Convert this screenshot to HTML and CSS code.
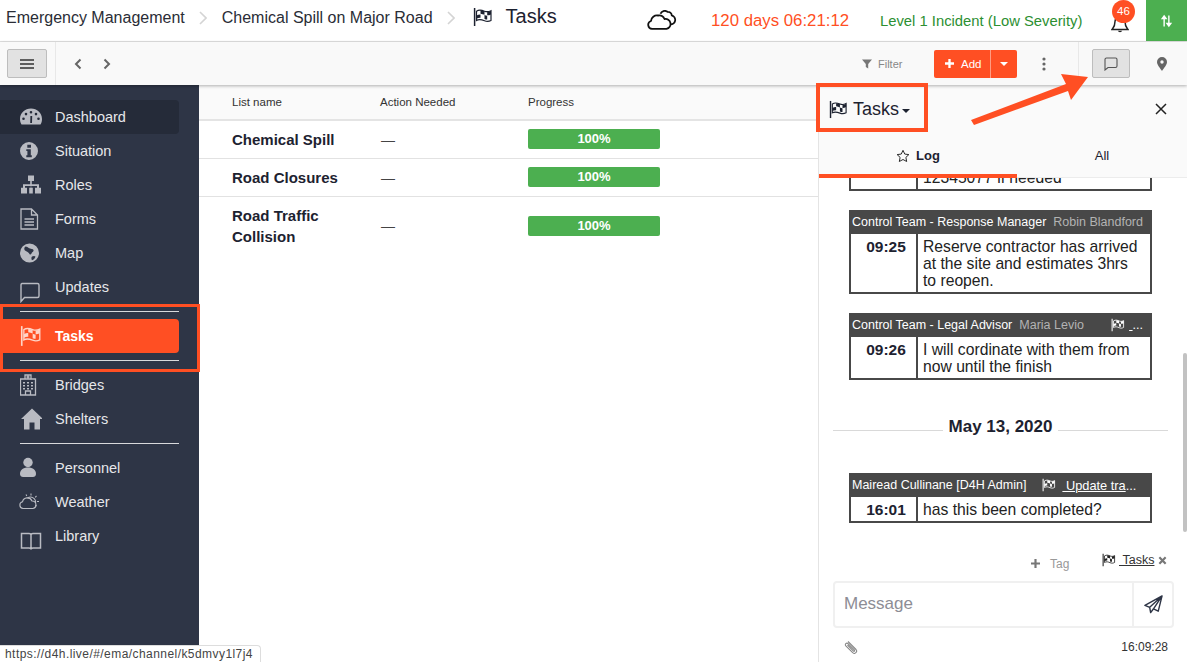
FILE: index.html
```html
<!DOCTYPE html>
<html lang="en">
<head>
<meta charset="utf-8">
<title>Tasks</title>
<link rel="stylesheet" href="styles.css">
</head>
<body>
<svg class="defs" width="0" height="0" aria-hidden="true">
  <symbol id="flag" viewBox="0 0 20 20">
    <path d="M1.600 1v18" fill="none" stroke="currentColor" stroke-width="1.500"/>
    <path d="M3.500 4.200c3-2 5.500-1 8 0s4 .8 6.500-.5v9.800c-2.500 1.300-4 1.300-6.500.3s-5-2-8-.3z" fill="none" stroke="currentColor" stroke-width="1.200"/>
    <path d="M7.500 3.300c1.500.1 2.800.6 4 1v3.500c-1.300-.5-2.600-1-4-1.100zM14.200 5c1.200 0 2.400-.2 3.800-.9v3.300c-1.400.7-2.600 1-3.800.9zM3.500 8.500c1.300-.8 2.700-1.200 4-1.100v3.400c-1.400-.1-2.700.2-4 .9zM11.500 8c1 .4 1.800.7 2.700.8v3.800c-.9 0-1.800-.3-2.700-.6z" fill="currentColor"/>
  </symbol>
</svg>

<header class="topbar">
  <nav class="crumbs">
    <span class="crumb">Emergency Management</span>
    <svg class="crumb-sep" viewBox="0 0 8 14"><path d="M1 1l6 6-6 6" fill="none" stroke="#d4d4d4" stroke-width="1.600"/></svg>
    <span class="crumb">Chemical Spill on Major Road</span>
    <svg class="crumb-sep" viewBox="0 0 8 14"><path d="M1 1l6 6-6 6" fill="none" stroke="#d4d4d4" stroke-width="1.600"/></svg>
    <svg class="crumb-flag"><use href="#flag"/></svg>
    <span class="crumb-current">Tasks</span>
  </nav>
  <svg class="cloud" viewBox="0 0 30 20"><path d="M5 18.800a4 4 0 0 1-1-7.800 6 6 0 0 1 7-5.500 6 6 0 0 1 6.500 3.500 5 5 0 0 1 2 9.800z" fill="none" stroke="#111" stroke-width="1.800" stroke-linejoin="round"/><path d="M13.500 3.800a4.500 4.500 0 0 1 7-2 4 4 0 0 1 4.300 3.600 4.600 4.600 0 0 1-1.800 9" fill="none" stroke="#111" stroke-width="1.800"/></svg>
  <span class="timer">120 days 06:21:12</span>
  <span class="level">Level 1 Incident (Low Severity)</span>
  <div class="bell">
    <svg viewBox="0 0 18 18"><path d="M9 1.500a5 5 0 0 0-5 5c0 5-2 6.500-3 8h16c-1-1.500-3-3-3-8a5 5 0 0 0-5-5z" fill="none" stroke="#222" stroke-width="1.500"/><path d="M6.800 15.800a2.300 2 0 0 0 4.400 0z" fill="#222"/></svg>
    <span class="badge">46</span>
  </div>
  <div class="sort-box">
    <svg viewBox="0 0 14 16"><path d="M4 15V3M1.500 5L4 1.500 6.500 5z M10 1v12M7.500 11l2.500 3.500 2.500-3.500z" fill="#fff" stroke="#fff" stroke-width="1.800"/></svg>
  </div>
</header>

<div class="toolbar">
  <button class="tool-btn menu-btn" aria-label="Menu"><svg viewBox="0 0 14 10"><path d="M0 1h14M0 5h14M0 9h14" stroke="#333" stroke-width="1.500"/></svg></button>
  <span class="tool-sep first"></span>
  <svg class="chev" viewBox="0 0 8 12"><path d="M6.500 1.500L2 6l4.500 4.500" fill="none" stroke="#666" stroke-width="2"/></svg>
  <svg class="chev next" viewBox="0 0 8 12"><path d="M1.500 1.500L6 6l-4.500 4.500" fill="none" stroke="#666" stroke-width="2"/></svg>
  <span class="tool-filter"><svg viewBox="0 0 10 10"><path d="M0 .500h10L6.200 5v4.500L3.800 8V5z" fill="#777"/></svg>Filter</span>
  <div class="add-btn">
    <span class="add-main"><svg viewBox="0 0 10 10"><path d="M5 0v10M0 5h10" stroke="#fff" stroke-width="2.600"/></svg>Add</span>
    <span class="add-caret"></span>
  </div>
  <svg class="kebab" viewBox="0 0 4 14"><circle cx="2" cy="2" r="1.600" fill="#666"/><circle cx="2" cy="7" r="1.600" fill="#666"/><circle cx="2" cy="12" r="1.600" fill="#666"/></svg>
  <span class="tool-sep second"></span>
  <button class="tool-btn chat-btn" aria-label="Chat"><svg viewBox="0 0 14 14"><path d="M2.500 1h9A1.500 1.500 0 0 1 13 2.500v6.500A1.500 1.500 0 0 1 11.500 10.500H4L1 13V2.500A1.500 1.500 0 0 1 2.500 1z" fill="none" stroke="#555" stroke-width="1.100"/></svg></button>
  <svg class="pin" viewBox="0 0 10 14"><path fill-rule="evenodd" d="M5 0a5 5 0 0 1 5 5c0 3-3.500 6.500-5 9-1.500-2.500-5-6-5-9a5 5 0 0 1 5-5zm0 3.300a1.700 1.700 0 1 0 0 3.400 1.700 1.700 0 0 0 0-3.400z" fill="#666"/></svg>
</div>

<div class="content">
  <aside class="sidebar">
    <a class="nav-item active-soft"><svg class="nav-icon" viewBox="0 0 22 22"><path fill-rule="evenodd" d="M11 2.500C5 2.500 0 7 0 13c0 2 .5 4 1.500 5.500h19C21.500 17 22 15 22 13c0-6-5-10.500-11-10.500zM11 5a1.300 1.300 0 1 1 0 2.600A1.300 1.300 0 0 1 11 5zM6 6.800a1.300 1.300 0 1 1 0 2.600 1.300 1.300 0 0 1 0-2.600zM16 6.800a1.300 1.300 0 1 1 0 2.600 1.300 1.300 0 0 1 0-2.600zM3.500 11.500a1.300 1.300 0 1 1 0 2.600 1.300 1.300 0 0 1 0-2.600zM18.500 11.500a1.300 1.300 0 1 1 0 2.600 1.300 1.300 0 0 1 0-2.600zM10.200 17l.2-7h1.800l-.2 7z" fill="#b9bbc2"/></svg>Dashboard</a>
    <a class="nav-item"><svg class="nav-icon" viewBox="2 0 22 22"><path fill-rule="evenodd" d="M11 2a9 9 0 1 1 0 18 9 9 0 0 1 0-18zM9.300 4.800v3h3.700v-3zM8.300 9.300v1.800h1.100v4.200H8.300v1.900h5.500v-1.900h-1V9.300z" fill="#b9bbc2"/></svg>Situation</a>
    <a class="nav-item"><svg class="nav-icon" viewBox="0 0 22 22"><path d="M8 1.500h6v5.500h-2.200v3.200h7.200v3.500h2v5.800h-6v-5.800h2v-1.700h-6.200v1.700h2v5.800H9.200v-5.800h2v-1.700H5v1.700h2v5.800H1v-5.800h2v-3.500h7.200V7H8z" fill="#b9bbc2"/></svg>Roles</a>
    <a class="nav-item"><svg class="nav-icon" viewBox="2 0 22 22"><path d="M3 1h10.500L19.500 7v14H3zM13.500 1v6h6M6.500 11h9.500M6.500 14h9.500M6.500 17h9.500" fill="none" stroke="#b9bbc2" stroke-width="1.300"/></svg>Forms</a>
    <a class="nav-item"><svg class="nav-icon" viewBox="1.500 0 22 22"><path fill-rule="evenodd" d="M11 1.500a9.500 9.500 0 1 1 0 19 9.500 9.500 0 0 1 0-19zM7 4.500c2 0 2.500 1.500 4.500 2 1 .5 3 0 3.500 1.500.5 2-1.500 2-2 3.500-.5 1.200-1.500 1.500-2 .5-.5-1.500-3-2.500-4.500-3.500C5.500 7.500 5.500 5.500 7 4.500zM13.500 14.500c1.500-.7 3-.7 3.500.3-.5 1.500-2 3-3.500 3.500-.8-1.200-.8-3 0-3.800z" fill="#b9bbc2"/></svg>Map</a>
    <a class="nav-item updates"><svg class="nav-icon" viewBox="1 0 22 22"><path d="M3 2.500h15.500A1.500 1.500 0 0 1 20 4v11a1.500 1.500 0 0 1-1.500 1.500H5.500L2 20.500V4A1.500 1.500 0 0 1 3 2.500z" fill="none" stroke="#b9bbc2" stroke-width="1.400"/></svg>Updates</a>
    <hr class="nav-rule">
    <a class="nav-item current"><svg class="nav-icon flagged"><use href="#flag"/></svg>Tasks</a>
    <hr class="nav-rule">
    <a class="nav-item"><svg class="nav-icon" viewBox="3 0 22 22"><path d="M3.500 5h15v16h-15zM8 5V1h6v4M11 1.500v3M9.500 3h3M8.500 21v-4h5v4" fill="none" stroke="#b9bbc2" stroke-width="1.300"/><path d="M6 8h2v1.500H6zM10 8h2v1.500h-2zM14 8h2v1.500h-2zM6 11h2v1.500H6zM10 11h2v1.500h-2zM14 11h2v1.500h-2zM6 14h2v1.500H6zM10 14h2v1.500h-2zM14 14h2v1.500h-2z" fill="#b9bbc2"/></svg>Bridges</a>
    <a class="nav-item"><svg class="nav-icon" viewBox="0 0 22 22"><path d="M12 .500L23 11h-3v10.500h-5.500V14.500h-5v7H4V11H1z" fill="#b9bbc2"/></svg>Shelters</a>
    <hr class="nav-rule">
    <a class="nav-item"><svg class="nav-icon" viewBox="1 0 22 22"><circle cx="9" cy="5.500" r="4.700" fill="#b9bbc2"/><path d="M1 17c0-4 3-6.500 8-6.500s8 2.500 8 6.500c0 2-1.500 3-3 3H4c-1.500 0-3-1-3-3z" fill="#b9bbc2"/></svg>Personnel</a>
    <a class="nav-item"><svg class="nav-icon weather" viewBox="0 0 22 18"><path d="M5 15.500a3.400 3.400 0 0 1-.5-6.700A5 5 0 0 1 14 8a3.800 3.800 0 0 1 1 7.500z" fill="none" stroke="#b9bbc2" stroke-width="1.100"/><path d="M9.500 5.200A5 5 0 0 1 17.500 10M13 .500v2M18.500 3l-1.300 1.300M21 8.500h-2M8 1.500l.8 1.500M18.500 13l-1.200-1" fill="none" stroke="#b9bbc2" stroke-width="1.100"/></svg>Weather</a>
    <a class="nav-item updates"><svg class="nav-icon" viewBox="0 0 22 22"><path d="M1.500 3.500H9c1.200 0 2 .8 2 1.500v14.500c0-1-.8-1.500-2-1.500H1.500zM20.500 3.500H13c-1.200 0-2 .8-2 1.500v14.500c0-1 .8-1.500 2-1.500h7.500z" fill="none" stroke="#b9bbc2" stroke-width="1.500"/></svg>Library</a>
  </aside>

  <main class="list">
    <div class="list-head">
      <span>List name</span><span>Action Needed</span><span>Progress</span>
    </div>
    <div class="list-row">
      <strong class="row-name">Chemical Spill</strong><span class="row-dash">—</span><div class="bar">100%</div>
    </div>
    <div class="list-row">
      <strong class="row-name">Road Closures</strong><span class="row-dash">—</span><div class="bar">100%</div>
    </div>
    <div class="list-row last">
      <strong class="row-name">Road Traffic Collision</strong><span class="row-dash">—</span><div class="bar">100%</div>
    </div>
  </main>

  <section class="panel">
    <div class="panel-head">
      <svg class="panel-flag"><use href="#flag"/></svg>
      <span class="panel-title">Tasks</span>
      <span class="caret"></span>
      <svg class="close" viewBox="0 0 12 12"><path d="M1 1l10 10M11 1L1 11" stroke="#222" stroke-width="1.500"/></svg>
    </div>
    <div class="tabs">
      <span class="tab on"><svg viewBox="0 0 16 16"><path d="M8 1.500l2 4.300 4.700.6-3.400 3.200.9 4.700L8 12l-4.200 2.300.9-4.700L1.300 6.400 6 5.800z" fill="none" stroke="#222" stroke-width="1.100"/></svg>Log</span>
      <span class="tab">All</span>
    </div>
    <div class="feed">
      <article class="msg">
        <div class="msg-body"><time class="msg-time"></time><p class="msg-text">12345077 if needed</p></div>
      </article>
      <article class="msg">
        <div class="msg-head"><span>Control Team - Response Manager</span><span class="who">Robin Blandford</span></div>
        <div class="msg-body"><time class="msg-time">09:25</time><p class="msg-text">Reserve contractor has arrived at the site and estimates 3hrs to reopen.</p></div>
      </article>
      <article class="msg">
        <div class="msg-head"><span>Control Team - Legal Advisor</span><span class="who">Maria Levio</span><span class="msg-tag"><svg><use href="#flag"/></svg><u>&nbsp;</u>...</span></div>
        <div class="msg-body"><time class="msg-time">09:26</time><p class="msg-text">I will cordinate with them from now until the finish</p></div>
      </article>
      <div class="date-rule"><span>May 13, 2020</span></div>
      <article class="msg">
        <div class="msg-head"><span>Mairead Cullinane [D4H Admin]</span><span class="msg-tag wide"><svg><use href="#flag"/></svg><u>&nbsp;Update tra</u>...</span></div>
        <div class="msg-body"><time class="msg-time">16:01</time><p class="msg-text">has this been completed?</p></div>
      </article>
    </div>
    <div class="tag-row">
      <svg class="tag-plus" viewBox="0 0 10 10"><path d="M5 0v10M0 5h10" stroke="#777" stroke-width="2.400"/></svg>
      <span class="tag-label">Tag</span>
      <svg class="tag-flag"><use href="#flag"/></svg>
      <u class="tag-name">&nbsp;Tasks</u>
      <svg class="tag-x" viewBox="0 0 10 10"><path d="M1.500 1.500l7 7M8.500 1.500l-7 7" stroke="#777" stroke-width="2.400"/></svg>
    </div>
    <div class="composer">
      <span class="placeholder">Message</span>
      <span class="send"><svg viewBox="0 0 20 20"><path d="M19 1L1 11l5 2 1 5.500 3-4 5 2.500zM19 1L6 13M19 1l-9 13.500" fill="none" stroke="#2e3546" stroke-width="1.500" stroke-linejoin="round"/></svg></span>
    </div>
    <div class="panel-foot">
      <svg class="clip" viewBox="0 0 14 14"><path d="M4 1.500l8 8a2.300 2.300 0 0 1-3.300 3.200L1.800 5.800a1.500 1.500 0 0 1 2.200-2.200l6.500 6.500a.7.700 0 0 1-1 1L3.500 5" fill="none" stroke="#888" stroke-width="1.100"/></svg>
      <span>16:09:28</span>
    </div>
  </section>
</div>

<span class="scroll-thumb"></span>
<div class="status-url">https://d4h.live/#/ema/channel/k5dmvy1l7j4</div>
<span class="mark mark-nav"></span>
<span class="mark mark-title"></span>
<svg class="mark-arrow" viewBox="0 0 1187 662"><path d="M971 120L1066 84l-5-10 27 3-17 23-3-9-94 34z" fill="#ff4f23"/></svg>
</body>
</html>
```
FILE: styles.css
```css
* { box-sizing: border-box; }
html, body { margin: 0; height: 100%; }
body {
  display: flex;
  flex-direction: column;
  height: 100vh;
  overflow: hidden;
  position: relative;
  font-family: "Liberation Sans", Arial, sans-serif;
  color: #1d2230;
  background: #fff;
}
.defs { position: absolute; }

/* top bar */
.topbar {
  flex: 0 0 42px;
  display: flex;
  align-items: center;
  padding-left: 6px;
  background: #fff;
  border-bottom: 1px solid #e2e2e2;
}
.crumbs { display: flex; align-items: center; width: 641px; margin-top: -5px; }
.crumb { font-size: 16px; color: #2a2d36; }
.crumb-sep { width: 8px; height: 14px; margin: 0 15px 0 14px; }
.crumb-flag { width: 20px; height: 20px; margin: -3px 13px 0 3px; color: #1d2230; }
.crumb-current { font-size: 20px; margin-top: -3px; }
.cloud { width: 30px; height: 20px; margin-top: -2px; }
.timer { margin-left: 34px; font-size: 16.800px; color: #ff4f23; width: 169px; white-space: nowrap; }
.level { font-size: 14.800px; color: #2c8f32; width: 231px; white-space: nowrap; }
.bell { position: relative; width: 18px; height: 18px; }
.bell svg { display: block; width: 18px; height: 18px; margin-top: 3px; }
.badge {
  position: absolute;
  left: 1px;
  top: -12px;
  width: 23px;
  height: 23px;
  border-radius: 50%;
  background: #ff4f23;
  color: #fff;
  font-size: 11.500px;
  line-height: 23px;
  text-align: center;
}
.sort-box {
  margin-left: auto;
  width: 41px;
  height: 41px;
  background: #4caf50;
  display: flex;
  align-items: center;
  justify-content: center;
}
.sort-box svg { width: 11px; height: 14px; }

/* toolbar */
.toolbar {
  flex: 0 0 43px;
  display: flex;
  align-items: center;
  padding-left: 7px;
  background: #f9f9f9;
  box-shadow: 0 1px 3px rgba(0,0,0,.3);
  position: relative;
  z-index: 2;
}
.tool-btn {
  height: 29px;
  padding: 0;
  border: 1px solid #bdbdbd;
  border-radius: 2px;
  background: #e2e2e2;
  display: flex;
  align-items: center;
  justify-content: center;
}
.menu-btn { width: 40px; }
.menu-btn svg { width: 14px; height: 10px; }
.tool-sep { width: 1px; height: 43px; background: #e8e8e8; }
.tool-sep.first { margin-left: 8px; }
.chev { width: 8px; height: 12px; margin-left: 18px; }
.chev.next { margin-left: 21px; }
.tool-filter {
  margin-left: 751px;
  width: 72px;
  display: flex;
  align-items: center;
  font-size: 11px;
  color: #888;
}
.tool-filter svg { width: 10px; height: 10px; margin-right: 6px; }
.add-btn {
  width: 83px;
  height: 28px;
  display: flex;
  background: #ff4f23;
  border-radius: 2px;
  color: #fff;
  font-size: 11.500px;
}
.add-main {
  width: 57px;
  display: flex;
  align-items: center;
  padding-left: 11px;
  border-right: 1px solid #ff9c82;
}
.add-main svg { width: 9px; height: 9px; margin-right: 7px; }
.add-caret {
  margin: 12px 0 0 9px;
  width: 0;
  height: 0;
  border: 4px solid transparent;
  border-top: 4.500px solid #fff;
}
.kebab { width: 4px; height: 14px; margin-left: 25px; }
.tool-sep.second { margin-left: 32px; }
.chat-btn { width: 38px; margin-left: 13px; }
.chat-btn svg { width: 14px; height: 14px; }
.pin { width: 10px; height: 14px; margin-left: 27px; }

/* body */
.content { flex: 1; display: flex; min-height: 0; }
.sidebar {
  flex: 0 0 199px;
  padding: 15px 20px 0 0;
  background: #2e3546;
}
.nav-item {
  height: 34px;
  display: flex;
  align-items: center;
  padding-left: 20px;
  font-size: 14.500px;
  color: #e6e7ea;
  border-radius: 0 4px 4px 0;
}
.nav-item.active-soft { background: #252b39; }
.nav-item.current { background: #ff4f23; color: #fff; font-weight: 700; font-size: 14px; }
.nav-icon { flex: 0 0 22px; width: 22px; height: 22px; margin-right: 13px; }
.nav-icon.flagged { color: #ffd5c8; }
.nav-icon.weather { margin-left: -2px; margin-right: 15px; height: 18px; }
.updates .nav-icon { margin-top: 9px; }
.nav-rule { height: 1px; margin: 7px 0 7px 20px; border: 0; background: #d8d9dc; }

/* list */
.list { flex: 1; min-width: 0; }
.list-head, .list-row {
  display: grid;
  grid-template-columns: 148px 148px 132px;
  padding-left: 33px;
  align-items: center;
  border-bottom: 1px solid #e2e2e2;
}
.list-head {
  height: 36px;
  padding-bottom: 1px;
  font-size: 11.500px;
  color: #333;
  background: #fafafa;
  border-bottom: 2px solid #e4e4e4;
}
.list-row { height: 38px; }
.list-row.last { height: auto; padding-top: 8px; border-bottom: 0; }
.row-name { font-size: 15px; line-height: 21px; width: 120px; white-space: normal; }
.list-row:not(.last) .row-name { white-space: nowrap; width: auto; }
.row-dash { font-size: 14px; color: #444; padding-left: 1px; }
.list-row:not(.last) .row-dash { padding-top: 1px; }
.bar {
  height: 20px;
  margin-bottom: 1px;
  background: #4caf50;
  border-radius: 2px;
  color: #fff;
  font-size: 13px;
  font-weight: 700;
  line-height: 19px;
  text-align: center;
}

/* panel */
.panel {
  flex: 0 0 369px;
  display: flex;
  flex-direction: column;
  min-height: 0;
  border-left: 1px solid #e4e4e4;
  background: #fff;
}
.panel-head {
  flex: 0 0 48px;
  display: flex;
  align-items: center;
  padding-left: 10px;
  background: #fafafa;
}
.panel-flag { width: 19px; height: 19px; margin-right: 5px; }
.panel-title { font-size: 18px; }
.caret {
  margin: 4px 0 0 3px;
  border: 4px solid transparent;
  border-top: 4px solid #1d2230;
  border-bottom: 0;
}
.close { width: 12px; height: 12px; margin-left: auto; margin-right: 20px; }
.tabs { flex: 0 0 45px; display: flex; background: #fafafa; border-bottom: 1px solid #ececec; }
.tab {
  display: flex;
  align-items: center;
  justify-content: center;
  font-size: 13px;
  width: 170px;
}
.tab.on {
  width: 198px;
  padding-top: 4px;
  font-weight: 700;
  border-bottom: 4px solid #ff4f23;
  margin-bottom: -1px;
}
.tab svg { width: 14px; height: 14px; margin-right: 6px; }
.feed {
  flex: 1;
  min-height: 0;
  overflow: hidden;
  display: flex;
  flex-direction: column;
  justify-content: flex-end;
  padding-bottom: 22px;
}
.msg {
  flex-shrink: 0;
  width: 303px;
  margin: 0 0 19px 30px;
  background: #fff;
}
.msg:last-child { margin-bottom: 0; }
.msg-head {
  height: 24px;
  display: flex;
  align-items: center;
  gap: 7px;
  padding: 0 3px;
  background: #484848;
  color: #fff;
  font-size: 12.500px;
  white-space: nowrap;
}
.who { color: #b3b3b3; }
.msg-tag { margin-left: auto; margin-right: 6px; display: flex; align-items: center; }
.msg-tag.wide { margin-left: 9px; margin-right: 0; font-size: 12.800px; }
.msg-tag.wide svg { margin-right: 6px; }
.msg-tag svg { width: 14px; height: 14px; margin-right: 4px; color: #fff; }
.msg-body {
  display: flex;
  border: 2px solid #484848;
  border-top: 0;
}
.msg-time {
  flex: 0 0 67px;
  padding: 4px 0 0 5px;
  border-right: 2px solid #484848;
  font-size: 15.500px;
  font-weight: 700;
  line-height: 17px;
  text-align: center;
}
.msg-text {
  margin: 0;
  padding: 4px 12px 3px 5px;
  font-size: 15.700px;
  line-height: 17px;
  color: #222;
}
.date-rule {
  flex-shrink: 0;
  display: flex;
  align-items: center;
  gap: 6px;
  margin: 18px 19px 36px 14px;
  height: 20px;
  font-size: 17px;
  font-weight: 700;
  white-space: nowrap;
}
.date-rule::before, .date-rule::after {
  content: "";
  flex: 1;
  height: 1px;
  margin-top: 6px;
  background: #d9d9d9;
}
.tag-row {
  flex: 0 0 36px;
  display: flex;
  align-items: center;
  padding-left: 212px;
  font-size: 12.500px;
  color: #333;
}
.tag-plus { width: 9px; height: 9px; margin-right: 10px; }
.tag-label { color: #999; font-size: 12px; width: 52px; margin-top: 2px; }
.tag-flag { width: 14px; height: 14px; margin-right: 3px; color: #222; margin-top: -7px; }
.tag-name { margin-top: -7px; }
.tag-x { width: 9px; height: 9px; margin: -6px 0 0 4px; }
.composer {
  flex: 0 0 47px;
  display: flex;
  align-items: center;
  margin: 0 13px 0 14px;
  border: 2px solid #f0f0f0;
  border-radius: 4px;
}
.placeholder { flex: 1; padding: 0 0 2px 9px; font-size: 17px; color: #8d8d95; }
.send {
  flex: 0 0 40px;
  height: 100%;
  display: flex;
  align-items: center;
  justify-content: center;
  border-left: 2px solid #f0f0f0;
}
.send svg { width: 19px; height: 19px; }
.panel-foot {
  flex: 0 0 34px;
  display: flex;
  align-items: center;
  justify-content: space-between;
  padding: 4px 19px 0 25px;
  font-size: 12px;
  color: #333;
}
.clip { width: 14px; height: 14px; }

/* overlays */
.scroll-thumb {
  position: absolute;
  left: 1183px;
  top: 353px;
  width: 4px;
  height: 179px;
  background: #c2c2c2;
  border-radius: 2px;
}
.status-url {
  position: absolute;
  left: 0;
  top: 645px;
  width: 261px;
  height: 17px;
  padding-left: 5px;
  background: #fff;
  border: 1px solid #ddd;
  border-left: 0;
  border-bottom: 0;
  border-radius: 0 4px 0 0;
  font-size: 12px;
  line-height: 17px;
  letter-spacing: .44px;
  color: #444;
  white-space: nowrap;
  z-index: 3;
}
.mark { position: absolute; border-style: solid; border-color: #ff4f23; z-index: 3; }
.mark-nav { left: 0; top: 304px; width: 200px; height: 68px; border-width: 3px; }
.mark-title { left: 816px; top: 83px; width: 112px; height: 49px; border-width: 4px; }
.mark-arrow { position: absolute; left: 0; top: 0; width: 1187px; height: 662px; z-index: 4; pointer-events: none; }
```
